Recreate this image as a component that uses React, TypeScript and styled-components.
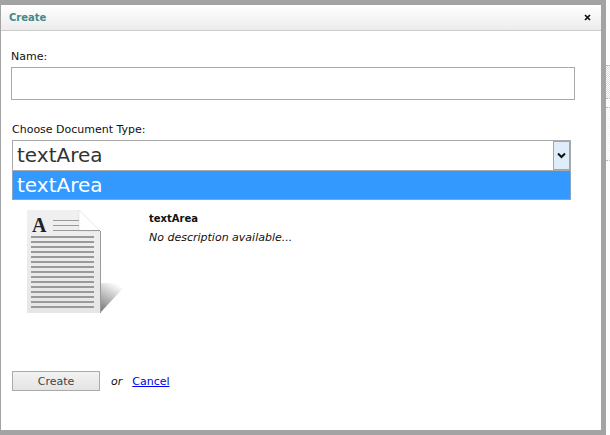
import styled, { createGlobalStyle } from "styled-components";

const GlobalStyle = createGlobalStyle`
  html, body {
    margin: 0;
    padding: 0;
    background: #fdfdfd;
  }
`;

const Page = styled.div`
  display: flex;
  width: 610px;
  height: 435px;
  overflow: hidden;
  font-family: "DejaVu Sans", sans-serif;
  font-size: 11px;
  color: #111;
`;

const Backdrop = styled.div`
  width: 606px;
  height: 435px;
  box-sizing: border-box;
  padding: 5px 5px 5px 1px;
  background: #a3a3a3;
`;

const Modal = styled.div`
  display: flex;
  flex-direction: column;
  height: 425px;
  background: #fff;
`;

const TitleBar = styled.div`
  display: flex;
  align-items: center;
  justify-content: space-between;
  box-sizing: border-box;
  height: 26px;
  padding: 0 10px 1px 8px;
  background: linear-gradient(#ffffff, #ececec);
  border-bottom: 1px solid #cccccc;
`;

const Title = styled.span`
  color: #3f8a8c;
  font-size: 10px;
  font-weight: 600;
`;

const Body = styled.div`
  display: flex;
  flex-direction: column;
  padding: 19px 0 0 10px;
`;

const Label = styled.label`
  display: block;
  height: 17px;
  line-height: 14px;
  margin-left: ${(p: { $indent?: number }) => p.$indent ?? 0}px;
`;

const NameInput = styled.div`
  width: 564px;
  height: 33px;
  box-sizing: border-box;
  border: 1px solid #aaaaaa;
  margin-bottom: 23px;
`;

const SelectBox = styled.div`
  position: relative;
  display: flex;
  justify-content: space-between;
  width: 559px;
  height: 31px;
  box-sizing: border-box;
  margin-left: 1px;
  border: 1px solid #aaaaaa;
  padding-left: 4px;
  font-size: 20px;
  line-height: 29px;
  color: #333;
`;

const ArrowButton = styled.div`
  display: flex;
  align-items: center;
  justify-content: center;
  width: 17px;
  height: 29px;
  box-sizing: border-box;
  border: 1px solid #8fa9c4;
  background: #dfecfa;
`;

const DropList = styled.div`
  position: absolute;
  top: 30px;
  left: -1px;
  width: 559px;
  height: 29px;
  box-sizing: border-box;
  padding-left: 4px;
  background: #3399ff;
  border: 1px solid #8ba6c4;
  border-top: 0;
  color: #fff;
  line-height: 29px;
`;

const Details = styled.div`
  display: flex;
  margin-top: 39px;
  margin-left: 16px;
  height: 161px;
`;

const DocIcon = styled.svg`
  display: block;
  width: 105px;
  height: 110px;
  flex: none;
`;

const Info = styled.div`
  margin-left: 17px;
  padding-top: 2px;
`;

const InfoName = styled.div`
  font-size: 10px;
  font-weight: 600;
  line-height: 14px;
  margin-bottom: 4px;
`;

const InfoText = styled.div`
  font-style: italic;
  line-height: 16px;
`;

const Actions = styled.div`
  display: flex;
  align-items: center;
  margin-left: 1px;
`;

const CreateButton = styled.button`
  width: 88px;
  height: 20px;
  box-sizing: border-box;
  padding: 0;
  border: 1px solid #aaaaaa;
  background: linear-gradient(#f2f2f2, #e4e4e4);
  color: #444;
  font: inherit;
`;

const Or = styled.em`
  margin: 0 10px 0 11px;
`;

const CancelLink = styled.a`
  color: #0000ee;
  text-decoration: underline;
`;

const Edge = styled.div`
  flex: 1;
  padding-top: 65px;
  background: #fdfdfd;
`;

const Hatch = styled.div<{ $height: number; $tone: string }>`
  height: ${(p) => p.$height}px;
  margin-bottom: 8px;
  border-top: 1px dotted #bbbbbb;
  border-bottom: 1px dotted #bbbbbb;
  background: repeating-conic-gradient(${(p) => p.$tone} 0 25%, #ffffff 0 50%) 0 0 / 2px 2px;
`;

const textLines = Array.from({ length: 15 }, (_, i) => 26 + i * 5);

const App = () => {
  return (
    <Page>
      <GlobalStyle />
      <Backdrop>
        <Modal>
          <TitleBar>
            <Title>Create</Title>
            <svg width="7" height="7" viewBox="0 0 7 7">
              <path d="M1 1l5 5M6 1l-5 5" stroke="#111" strokeWidth="1.7" />
            </svg>
          </TitleBar>
          <Body>
            <Label>Name:</Label>
            <NameInput />
            <Label $indent={1}>Choose Document Type:</Label>
            <SelectBox>
              textArea
              <ArrowButton>
                <svg width="9" height="7" viewBox="0 0 9 7">
                  <path d="M1 1.5l3.5 3.5L8 1.5" fill="none" stroke="#111" strokeWidth="2" />
                </svg>
              </ArrowButton>
              <DropList>textArea</DropList>
            </SelectBox>
            <Details>
              <DocIcon viewBox="0 0 105 110">
                <defs>
                  <linearGradient id="shadow" gradientUnits="userSpaceOnUse" x1="74" y1="102" x2="90" y2="74">
                    <stop offset="0" stopColor="#777777" />
                    <stop offset="1" stopColor="#ffffff" />
                  </linearGradient>
                  <linearGradient id="sheet" x1="0" y1="0" x2="0" y2="1">
                    <stop offset="0" stopColor="#f0f0f0" />
                    <stop offset="1" stopColor="#e6e6e6" />
                  </linearGradient>
                </defs>
                <polygon points="73,103 101,73 73,73" fill="url(#shadow)" />
                <polygon points="0,0 52,0 73,21 73,103 0,103" fill="url(#sheet)" />
                <rect x="73" y="21" width="1" height="82" fill="#9a9a9a" />
                <polygon points="52,0 73,21 52,21" fill="#fff" stroke="#d5d5d5" strokeWidth="0.5" />
                <text x="5" y="22" fontFamily="Liberation Serif" fontWeight="700" fontSize="20" fill="#222">
                  A
                </text>
                <g fill="#9a9a9a">
                  <rect x="26" y="10" width="26" height="1" />
                  <rect x="26" y="15" width="26" height="1" />
                  <rect x="26" y="20" width="47" height="1" />
                  {textLines.map((y) => (
                    <rect key={y} x="4" y={y} width="63" height="2" />
                  ))}
                </g>
              </DocIcon>
              <Info>
                <InfoName>textArea</InfoName>
                <InfoText>No description available...</InfoText>
              </Info>
            </Details>
            <Actions>
              <CreateButton>Create</CreateButton>
              <Or>or</Or>
              <CancelLink href="#">Cancel</CancelLink>
            </Actions>
          </Body>
        </Modal>
      </Backdrop>
      <Edge>
        <Hatch $height={32} $tone="#dddddd" />
        <Hatch $height={52} $tone="#f2f2f2" />
      </Edge>
    </Page>
  );
};

export default App;
